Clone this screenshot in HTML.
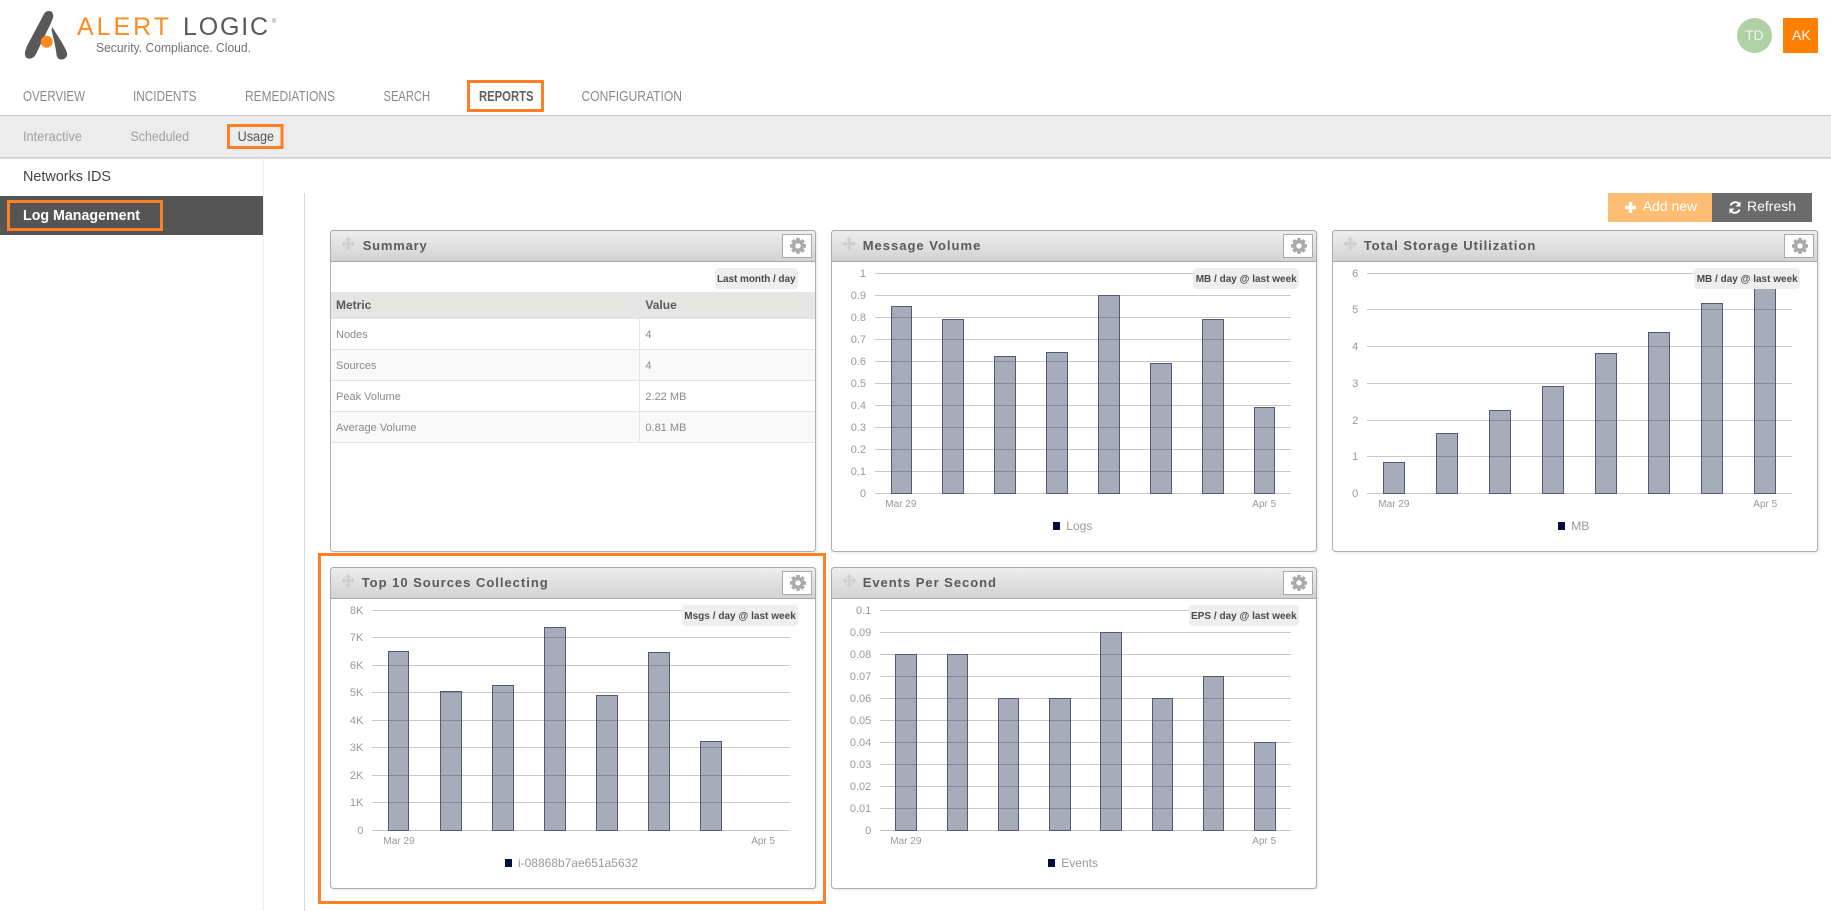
<!DOCTYPE html>
<html lang="en"><head><meta charset="utf-8"><title>Alert Logic - Usage</title>
<style>
html,body{margin:0;padding:0;background:#fff;width:1831px;height:911px;overflow:hidden}
svg{display:block;font-family:"Liberation Sans",sans-serif}
.g{fill:none;stroke:#c8c8c8;stroke-width:1}
.b{fill:#001039;fill-opacity:.35;stroke:#525a7a;stroke-width:1}
.y{font-size:11px;fill:#999;text-anchor:end}
.x{font-size:10px;fill:#999}
.l{font-size:12px;fill:#999}
.t{font-size:13px;font-weight:700;fill:#5a5a5a}
.p{font-size:10px;font-weight:700;fill:#4a4a4a}
.n{font-size:15px;fill:#8a8a8a}
.s{font-size:14px;fill:#a0a0a0}
.c{font-size:11px;fill:#8a8a8a}
.o{fill:none;stroke:#ff7f27;stroke-width:3}
</style></head>
<body>
<svg width="1831" height="911" viewBox="0 0 1831 911" xmlns="http://www.w3.org/2000/svg">
<defs>
<linearGradient id="hg" x1="0" y1="0" x2="0" y2="1"><stop offset="0" stop-color="#eeeeee"/><stop offset="1" stop-color="#d2d2d2"/></linearGradient>
<g id="panel">
<rect x="0" y="0" width="485" height="321" rx="3" fill="#fff" stroke="#b0b0b0" style="filter:drop-shadow(1px 1px 1px rgba(0,0,0,.10))"/>
<path d="M0 31V3a3 3 0 0 1 3-3H482a3 3 0 0 1 3 3V31Z" fill="url(#hg)" stroke="#aaa"/>
<rect x="452" y="4" width="29" height="23" fill="#fff" stroke="#aaa"/>
<g transform="translate(467.5 15.4)">
<path d="M0-8V-5M0 5V8M-8 0H-5M5 0H8M-5.66-5.66L-3.5-3.5M3.5 3.5L5.66 5.66M-5.66 5.66L-3.5 3.5M3.5-3.5L5.66-5.66" stroke="#aaa" stroke-width="3.6" fill="none"/>
<circle r="4.4" fill="none" stroke="#aaa" stroke-width="3.4"/>
</g>
<g transform="translate(17.8 13.2)" fill="#cfcfcf" stroke="none">
<rect x="-1.2" y="-4" width="2.4" height="8"/><rect x="-4" y="-1.2" width="8" height="2.4"/>
<path d="M0-7L3.2-3.4H-3.2ZM0 7L3.2 3.4H-3.2ZM-7 0L-3.4-3.2V3.2ZM7 0L3.4-3.2V3.2Z"/>
</g>
</g>
</defs>

<!-- logo -->
<path d="M44 14C46 10 52 10 53 14C54 17 52 20 51 23L36 54C33 60 26 60 25 55C24.5 52 26 49 27 46Z" fill="#58585a"/>
<path d="M52 27C56 33 66 48 67 53C68 58 63 60 60.5 59.5C57 59 56.5 55 56 51C55 44 53 36 51.5 30Z" fill="#58585a"/>
<circle cx="46.7" cy="41.7" r="6" fill="#ff8a1e"/>
<text x="77" y="35" font-size="25" fill="#ff8a1e" textLength="92" lengthAdjust="spacing">ALERT</text>
<text x="183" y="35" font-size="25" fill="#58585a" textLength="85" lengthAdjust="spacing">LOGIC</text>
<text x="272" y="23" font-size="6" fill="#777">®</text>
<text x="96" y="52" font-size="13" fill="#707070" textLength="155" lengthAdjust="spacingAndGlyphs">Security. Compliance. Cloud.</text>

<!-- avatars -->
<circle cx="1754.5" cy="35.5" r="17.5" fill="#b0d1a6"/>
<text x="1745" y="40" font-size="14" fill="#eef6ea">TD</text>
<rect x="1783" y="18" width="35" height="35" fill="#ff7f00"/>
<text x="1792" y="40" font-size="14" fill="#fff">AK</text>

<!-- nav -->
<text class="n" x="23" y="101" textLength="62" lengthAdjust="spacingAndGlyphs">OVERVIEW</text>
<text class="n" x="133" y="101" textLength="63.5" lengthAdjust="spacingAndGlyphs">INCIDENTS</text>
<text class="n" x="245" y="101" textLength="90" lengthAdjust="spacingAndGlyphs">REMEDIATIONS</text>
<text class="n" x="383.5" y="101" textLength="46.5" lengthAdjust="spacingAndGlyphs">SEARCH</text>
<text class="n" x="479" y="101" textLength="54.5" lengthAdjust="spacingAndGlyphs" style="font-weight:700;fill:#606060">REPORTS</text>
<text class="n" x="581.5" y="101" textLength="100.5" lengthAdjust="spacingAndGlyphs">CONFIGURATION</text>
<rect class="o" x="468.5" y="81.5" width="74" height="29"/>

<!-- subnav -->
<rect x="0" y="115" width="1831" height="43" fill="#ececec"/>
<rect x="0" y="115" width="1831" height="1" fill="#c8c8c8"/>
<rect x="0" y="157" width="1831" height="1.5" fill="#cfcfcf"/>
<rect x="0" y="158.5" width="1831" height="1" fill="#f2f2f2"/>
<text class="s" x="23" y="141" textLength="59" lengthAdjust="spacingAndGlyphs">Interactive</text>
<text class="s" x="130.5" y="141" textLength="58.5" lengthAdjust="spacingAndGlyphs">Scheduled</text>
<text class="s" x="237.6" y="141" textLength="36.4" lengthAdjust="spacingAndGlyphs" style="fill:#555">Usage</text>
<rect class="o" x="228.5" y="125.5" width="53.5" height="22"/>

<!-- sidebar -->
<rect x="263" y="158" width="1" height="753" fill="#eeeeee"/>
<rect x="304" y="193" width="1" height="718" fill="#d8d8d8"/>
<text x="23" y="181" font-size="15" fill="#444" textLength="88" lengthAdjust="spacingAndGlyphs">Networks IDS</text>
<rect x="0" y="196" width="263" height="39" fill="#555"/>
<text x="23" y="220" font-size="15" font-weight="700" fill="#fff" textLength="117" lengthAdjust="spacingAndGlyphs">Log Management</text>
<rect class="o" x="8.5" y="201.5" width="153" height="28"/>

<!-- buttons -->
<rect x="1608" y="193" width="104" height="29" fill="#ffbd73"/>
<rect x="1712" y="193" width="100" height="29" fill="#6b6b6b"/>
<path d="M1630.5 202V213M1625 207.5H1636" stroke="#fff" stroke-width="3.4" fill="none"/>
<text x="1642.7" y="211" font-size="14" fill="#fff">Add new</text>
<path d="M1730.5 205.5A5 5 0 0 1 1739 204M1739.5 209.5A5 5 0 0 1 1731 211" stroke="#fff" stroke-width="1.9" fill="none"/>
<path d="M1740.5 201.5V206.5H1735.5ZM1729.5 213.5V208.5H1734.5Z" fill="#fff"/>
<text x="1747" y="211" font-size="14" fill="#fff">Refresh</text>

<!-- panels -->
<use href="#panel" transform="translate(330.5 230.5)"/>
<use href="#panel" transform="translate(831.5 230.5)"/>
<use href="#panel" transform="translate(1332.5 230.5)"/>
<use href="#panel" transform="translate(330.5 567.5)"/>
<use href="#panel" transform="translate(831.5 567.5)"/>

<text class="t" x="362.7" y="250" textLength="64" lengthAdjust="spacing">Summary</text>
<text class="t" x="862.7" y="250" textLength="117.6" lengthAdjust="spacing">Message Volume</text>
<text class="t" x="1363.7" y="250" textLength="171.6" lengthAdjust="spacing">Total Storage Utilization</text>
<text class="t" x="361.7" y="587" textLength="186" lengthAdjust="spacing">Top 10 Sources Collecting</text>
<text class="t" x="862.7" y="587" textLength="133.3" lengthAdjust="spacing">Events Per Second</text>

<!-- summary table -->
<rect x="331" y="292" width="484" height="27" fill="#e5e5e3"/>
<rect x="331" y="349.5" width="484" height="31" fill="#f9f9f9"/>
<rect x="331" y="411.5" width="484" height="31" fill="#f9f9f9"/>
<path d="M331 318.5H815M331 349.5H815M331 380.5H815M331 411.5H815M331 442.5H815M639.5 292V442.5" stroke="#e4e4e4" fill="none"/>
<text x="336" y="309" font-size="12" font-weight="700" fill="#5a5a5a">Metric</text>
<text x="645.4" y="309" font-size="12" font-weight="700" fill="#5a5a5a">Value</text>
<text class="c" x="336" y="338">Nodes</text><text class="c" x="645.4" y="338">4</text>
<text class="c" x="336" y="369">Sources</text><text class="c" x="645.4" y="369">4</text>
<text class="c" x="336" y="400">Peak Volume</text><text class="c" x="645.4" y="400">2.22 MB</text>
<text class="c" x="336" y="431">Average Volume</text><text class="c" x="645.4" y="431">0.81 MB</text>
<rect x="715" y="268" width="83" height="21" rx="4" fill="#eeeeee"/>
<text class="p" x="717" y="282" textLength="78.5" lengthAdjust="spacing">Last month / day</text>

<!-- message volume -->
<path class="g" d="M875 273.5H1291M875 295.5H1291M875 317.5H1291M875 339.5H1291M875 361.5H1291M875 383.5H1291M875 405.5H1291M875 427.5H1291M875 449.5H1291M875 471.5H1291M875 493.5H1291"/>
<text class="y" x="866" y="277">1</text><text class="y" x="866" y="299">0.9</text><text class="y" x="866" y="321">0.8</text><text class="y" x="866" y="343">0.7</text><text class="y" x="866" y="365">0.6</text><text class="y" x="866" y="387">0.5</text><text class="y" x="866" y="409">0.4</text><text class="y" x="866" y="431">0.3</text><text class="y" x="866" y="453">0.2</text><text class="y" x="866" y="475">0.1</text><text class="y" x="866" y="497">0</text>
<rect class="b" x="891.5" y="306.5" width="20" height="187"/>
<rect class="b" x="942.5" y="319.5" width="21" height="174"/>
<rect class="b" x="994.5" y="356.5" width="21" height="137"/>
<rect class="b" x="1046.5" y="352.5" width="21" height="141"/>
<rect class="b" x="1098.5" y="295.5" width="21" height="198"/>
<rect class="b" x="1150.5" y="363.5" width="21" height="130"/>
<rect class="b" x="1202.5" y="319.5" width="21" height="174"/>
<rect class="b" x="1254.5" y="407.5" width="20" height="86"/>
<text class="x" x="885.3" y="507">Mar 29</text><text class="x" x="1252.3" y="507">Apr 5</text>
<rect x="1053" y="522" width="7" height="8" fill="#000f3c"/>
<text class="l" x="1066.3" y="530">Logs</text>
<rect x="1193" y="268" width="106" height="21" rx="4" fill="#eeeeee"/>
<text class="p" x="1195.7" y="282" textLength="101" lengthAdjust="spacing">MB / day @ last week</text>

<!-- storage -->
<path class="g" d="M1367 273.5H1792M1367 309.5H1792M1367 346.5H1792M1367 383.5H1792M1367 420.5H1792M1367 456.5H1792M1367 493.5H1792"/>
<text class="y" x="1358.3" y="277">6</text><text class="y" x="1358.3" y="313">5</text><text class="y" x="1358.3" y="350">4</text><text class="y" x="1358.3" y="387">3</text><text class="y" x="1358.3" y="424">2</text><text class="y" x="1358.3" y="460">1</text><text class="y" x="1358.3" y="497">0</text>
<rect class="b" x="1383.5" y="462.5" width="21" height="31"/>
<rect class="b" x="1436.5" y="433.5" width="21" height="60"/>
<rect class="b" x="1489.5" y="410.5" width="21" height="83"/>
<rect class="b" x="1542.5" y="386.5" width="21" height="107"/>
<rect class="b" x="1595.5" y="353.5" width="21" height="140"/>
<rect class="b" x="1648.5" y="332.5" width="21" height="161"/>
<rect class="b" x="1701.5" y="303.5" width="21" height="190"/>
<rect class="b" x="1754.5" y="285.5" width="21" height="208"/>
<text class="x" x="1378.3" y="507">Mar 29</text><text class="x" x="1753.3" y="507">Apr 5</text>
<rect x="1558" y="522" width="7" height="8" fill="#000f3c"/>
<text class="l" x="1571.3" y="530">MB</text>
<rect x="1694" y="268" width="106" height="21" rx="4" fill="#eeeeee"/>
<text class="p" x="1696.7" y="282" textLength="101" lengthAdjust="spacing">MB / day @ last week</text>

<!-- top 10 -->
<path class="g" d="M372 610.5H790M372 637.5H790M372 665.5H790M372 692.5H790M372 720.5H790M372 747.5H790M372 775.5H790M372 802.5H790M372 830.5H790"/>
<text class="y" x="363.4" y="614">8K</text><text class="y" x="363.4" y="641">7K</text><text class="y" x="363.4" y="669">6K</text><text class="y" x="363.4" y="696">5K</text><text class="y" x="363.4" y="724">4K</text><text class="y" x="363.4" y="751">3K</text><text class="y" x="363.4" y="779">2K</text><text class="y" x="363.4" y="806">1K</text><text class="y" x="363.4" y="834">0</text>
<rect class="b" x="388.5" y="651.5" width="20" height="179"/>
<rect class="b" x="440.5" y="691.5" width="21" height="139"/>
<rect class="b" x="492.5" y="685.5" width="21" height="145"/>
<rect class="b" x="544.5" y="627.5" width="21" height="203"/>
<rect class="b" x="596.5" y="695.5" width="21" height="135"/>
<rect class="b" x="648.5" y="652.5" width="21" height="178"/>
<rect class="b" x="700.5" y="741.5" width="21" height="89"/>
<text class="x" x="383.4" y="844">Mar 29</text><text class="x" x="751.2" y="844">Apr 5</text>
<rect x="505" y="859" width="7" height="8" fill="#000f3c"/>
<text class="l" x="518" y="867" textLength="120" lengthAdjust="spacing">i-08868b7ae651a5632</text>
<rect x="682" y="605" width="116" height="21" rx="4" fill="#eeeeee"/>
<text class="p" x="684.2" y="619" textLength="111.6" lengthAdjust="spacing">Msgs / day @ last week</text>

<!-- events -->
<path class="g" d="M880 610.5H1291M880 632.5H1291M880 654.5H1291M880 676.5H1291M880 698.5H1291M880 720.5H1291M880 742.5H1291M880 764.5H1291M880 786.5H1291M880 808.5H1291M880 830.5H1291"/>
<text class="y" x="871.3" y="614">0.1</text><text class="y" x="871.3" y="636">0.09</text><text class="y" x="871.3" y="658">0.08</text><text class="y" x="871.3" y="680">0.07</text><text class="y" x="871.3" y="702">0.06</text><text class="y" x="871.3" y="724">0.05</text><text class="y" x="871.3" y="746">0.04</text><text class="y" x="871.3" y="768">0.03</text><text class="y" x="871.3" y="790">0.02</text><text class="y" x="871.3" y="812">0.01</text><text class="y" x="871.3" y="834">0</text>
<rect class="b" x="895.5" y="654.5" width="21" height="176"/>
<rect class="b" x="947.5" y="654.5" width="20" height="176"/>
<rect class="b" x="998.5" y="698.5" width="20" height="132"/>
<rect class="b" x="1049.5" y="698.5" width="21" height="132"/>
<rect class="b" x="1100.5" y="632.5" width="21" height="198"/>
<rect class="b" x="1152.5" y="698.5" width="20" height="132"/>
<rect class="b" x="1203.5" y="676.5" width="20" height="154"/>
<rect class="b" x="1254.5" y="742.5" width="21" height="88"/>
<text class="x" x="890.3" y="844">Mar 29</text><text class="x" x="1252.3" y="844">Apr 5</text>
<rect x="1048" y="859" width="7" height="8" fill="#000f3c"/>
<text class="l" x="1061.3" y="867">Events</text>
<rect x="1189" y="605" width="110" height="21" rx="4" fill="#eeeeee"/>
<text class="p" x="1191" y="619" textLength="105.7" lengthAdjust="spacing">EPS / day @ last week</text>

<rect class="o" x="319.5" y="554.5" width="505" height="348"/>
</svg>
</body></html>
